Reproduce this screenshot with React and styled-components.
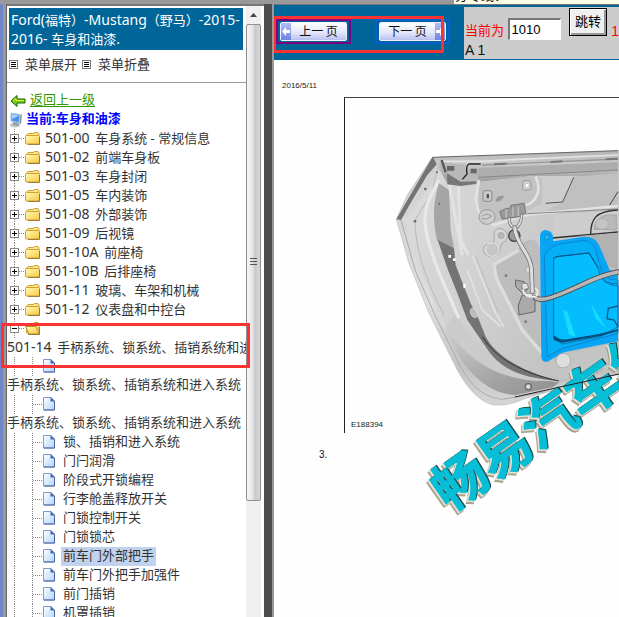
import React from 'react';
import styled, { createGlobalStyle } from 'styled-components';

const GlobalStyle = createGlobalStyle`
  * {
    box-sizing: border-box;
  }
  body {
    margin: 0;
    overflow: hidden;
    background: #999;
    font-family: "Noto Sans", "Noto Sans CJK SC", sans-serif;
    font-size: 13px;
    color: #333;
  }
`;

const Page = styled.div`
  display: flex;
  flex-direction: column;
  height: 100vh;
  overflow: hidden;
`;

const TopStrip = styled.div`
  display: flex;
  flex: none;
  justify-content: flex-end;
  align-items: flex-end;
  height: 4px;
  overflow: hidden;
  background: #999;
`;

const Hotline = styled.div`
  width: 165px;
  height: 16px;
  padding-left: 1px;
  background: #ffffe6;
  color: #111;
  line-height: 16px;
  white-space: nowrap;
  font-family: "Liberation Sans", "Noto Sans CJK SC", sans-serif;
`;

const Frames = styled.div`
  display: flex;
  flex: 1;
  min-height: 0;
`;

const Edge = styled.div`
  flex: none;
  width: 7px;
  border-left: 3px solid #6f86cc;
  border-right: 1px solid #666;
  background: #999;
`;

const Sidebar = styled.aside`
  position: relative;
  display: flex;
  flex: none;
  width: 257px;
  border-top: 2px solid #777;
  background: #fff;
`;

const SidebarBody = styled.div`
  flex: 1;
  min-width: 0;
  overflow: hidden;
  padding-top: 2px;
`;

const Title = styled.h1`
  margin: 0 3px 0 2px;
  padding: 2px;
  background: #069;
  color: #fff;
  font-size: 14px;
  font-weight: 400;
  white-space: nowrap;
`;

const Line = styled.span`
  display: block;
  height: 19px;
  line-height: 19px;
`;

const Cn = styled.span`
  font-size: 13px;
`;

const MenuRow = styled.div`
  display: flex;
  align-items: center;
  gap: 5px;
  height: 19px;
  margin: 5px 0 8px 2px;
`;

const MenuLink = styled.a`
  display: flex;
  align-items: center;
  gap: 7px;
  color: #333;
  line-height: 19px;
  text-decoration: none;
`;

const Rule = styled.hr`
  margin: 0 0 8px;
  border: 0;
  border-top: 1px solid #999;
`;

const CrumbRow = styled.div`
  display: flex;
  align-items: center;
  gap: ${(props) => props.$gap};
  height: 19px;
  padding-left: 3px;
`;

const BackLink = styled.a`
  height: 19px;
  color: #390;
  line-height: 17px;
  text-underline-offset: 2px;
`;

const Current = styled.strong`
  height: 19px;
  color: #00f;
  line-height: 17px;
`;

const Tree = styled.ul`
  margin: 0;
  padding: 0;
  list-style: none;
`;

const TreeItem = styled.li`
  white-space: nowrap;
`;

const TreeRow = styled.a`
  display: flex;
  height: 19px;
  color: #333;
  text-decoration: none;
`;

const TreeLabel = styled.span`
  height: 19px;
  padding: 0 2px;
  line-height: 17px;
  background: ${(props) => (props.$active ? '#c1d2ee' : 'transparent')};
`;

const WrappedLabel = styled.span`
  display: block;
  height: 19px;
  overflow: hidden;
  line-height: 17px;
`;

const Code = styled.span`
  margin-right: 2px;
  font-size: 14px;
`;

const ScrollTrack = styled.div`
  display: flex;
  flex: none;
  flex-direction: column;
  width: 18px;
  border-right: 3px solid #fff;
  background: #f0f0f0;
`;

const ScrollUp = styled.div`
  display: flex;
  flex: none;
  align-items: center;
  justify-content: center;
  height: 18px;
`;

const ScrollThumb = styled.div`
  display: flex;
  align-items: center;
  justify-content: center;
  height: 78%;
  border: 1px solid #8f8f8f;
  border-radius: 2px;
  background: linear-gradient(90deg, #f6f6f6, #e4e4e6 45%, #c8c8ce 60%, #d6d6da);
`;

const Divider = styled.div`
  flex: none;
  width: 10px;
  border-right: 2px solid #999;
  background: #4d4d4d;
`;

const Main = styled.main`
  display: flex;
  flex: 1;
  flex-direction: column;
  min-width: 0;
  overflow: hidden;
  border-top: 1px solid #777;
  background: #fff;
`;

const Toolbar = styled.div`
  position: relative;
  display: flex;
  flex: none;
  height: 55px;
  padding: 2px 0 1px;
  background: #069;
`;

const Pager = styled.div`
  display: flex;
  flex: none;
  gap: 24px;
  width: 190px;
  padding: 12px 0 0 2px;
`;

const PageButton = styled.button`
  display: flex;
  align-items: center;
  justify-content: center;
  width: 75px;
  height: 25px;
  padding: 0;
  border: 2px solid ${(props) => props.$outline};
  background: #069;
  color: #111;
  font: 12px "Noto Sans CJK SC", sans-serif;
`;

const ButtonFace = styled.span`
  display: flex;
  flex: 1;
  align-items: stretch;
  height: 19px;
  margin: 0 2px;
  border: 1px solid #f2f2ff;
  border-radius: 2px;
  background: linear-gradient(#fff, #e2e4fb 60%, #b9bff0);
`;

const ArrowCell = styled.span`
  display: flex;
  flex: none;
  align-items: center;
  justify-content: center;
  width: 10px;
  background: linear-gradient(#b3bdf3, #6f82e2);
`;

const ButtonText = styled.span`
  flex: 1;
  line-height: 16px;
  white-space: nowrap;
  text-align: center;
`;

const JumpPanel = styled.form`
  flex: 1;
  min-width: 0;
  overflow: hidden;
  padding: 1px 0 0 1px;
  background: #ccc;
`;

const JumpRow = styled.div`
  display: flex;
  align-items: flex-start;
  height: 33px;
  white-space: nowrap;
`;

const JumpLabel = styled.label`
  width: 43px;
  padding-top: 14px;
  color: #f00;
  line-height: 17px;
`;

const JumpInput = styled.input`
  width: 53px;
  height: 22px;
  margin-top: 10px;
  padding: 1px 2px;
  border: 1px solid #fff;
  border-top: 2px solid #777;
  border-left: 2px solid #777;
  background: #fff;
  font: 13px "Liberation Sans", sans-serif;
`;

const JumpButton = styled.button`
  width: 39px;
  height: 28px;
  margin-left: 8px;
  padding: 0 0 3px;
  border: 1px solid #000;
  background: #f0f0f0;
  box-shadow: inset 1px 1px #fff, inset -2px -2px #999;
  color: #000;
  font: 13px "Noto Sans CJK SC", sans-serif;
`;

const PageCount = styled.span`
  padding: 14px 0 0 4px;
  color: #f00;
  font: 14px/19px "Liberation Sans", sans-serif;
`;

const PageName = styled.div`
  color: #111;
  font: 14px/18px "Liberation Sans", sans-serif;
`;

const Document = styled.article`
  flex: 1;
  min-height: 0;
  padding-top: 21px;
  background: #fefefe;
  font-family: "Liberation Sans", sans-serif;
`;

const DocDate = styled.time`
  display: block;
  height: 16px;
  padding-left: 8px;
  color: #222;
  font-size: 8px;
  line-height: 10px;
`;

const Figure = styled.figure`
  display: flex;
  flex-direction: column;
  justify-content: space-between;
  height: 336px;
  margin: 0 0 0 70px;
  border-top: 1px solid #444;
  border-left: 1px solid #222;
`;

const Caption = styled.figcaption`
  padding: 0 0 3px 6px;
  color: #222;
  font-size: 8px;
  line-height: 10px;
`;

const Step = styled.p`
  margin: 16px 0 0 45px;
  color: #111;
  font-size: 10px;
  line-height: 12px;
`;

const Drawing = styled.svg`
  flex: none;
  display: block;
  overflow: visible;
`;

const Marker = styled.div`
  position: absolute;
  z-index: 2;
  pointer-events: none;
  border: 3px solid #fa3232;
  top: ${(props) => props.$top};
  left: ${(props) => props.$left};
  width: ${(props) => props.$width};
  height: ${(props) => props.$height};
`;

const folders = [
  ['501-00', '车身系统 - 常规信息'],
  ['501-02', '前端车身板'],
  ['501-03', '车身封闭'],
  ['501-05', '车内装饰'],
  ['501-08', '外部装饰'],
  ['501-09', '后视镜'],
  ['501-10A', '前座椅'],
  ['501-10B', '后排座椅'],
  ['501-11', '玻璃、车架和机械'],
  ['501-12', '仪表盘和中控台'],
];

const pages = [
  { name: '手柄系统、锁系统、插销系统和进入系统', wrapped: true },
  { name: '手柄系统、锁系统、插销系统和进入系统', wrapped: true },
  { name: '锁、插销和进入系统' },
  { name: '门闩润滑' },
  { name: '阶段式开锁编程' },
  { name: '行李舱盖释放开关' },
  { name: '门锁控制开关' },
  { name: '门锁锁芯' },
  { name: '前车门外部把手', active: true },
  { name: '前车门外把手加强件' },
  { name: '前门插销' },
  { name: '机罩插销' },
];

const MenuIcon = () => (
  <svg width="9" height="9" shapeRendering="crispEdges" aria-hidden="true">
    <rect x="0.5" y="0.5" width="8" height="8" fill="#fff" stroke="#777" />
    <path d="M2 2.5h5M2 4.5h5M2 6.5h5" stroke="#000" />
  </svg>
);

const BackIcon = () => (
  <svg width="16" height="14" viewBox="0 0 16 14" aria-hidden="true">
    <path d="M1 7L7 1.5V5H15V9H7V12.5Z" fill="#7c1" stroke="#161" />
    <path d="M3 7L6 4.5V6.5H14" fill="none" stroke="#ee3" />
  </svg>
);

const ComputerIcon = () => (
  <svg width="13" height="16" viewBox="0 0 13 16" aria-hidden="true">
    <ellipse cx="5" cy="13" rx="5" ry="2.5" fill="#c3c5c9" />
    <path d="M3 9L9 11L8 14L3 13Z" fill="#92a0b2" />
    <path d="M1 1L10 2.5L9 11L1 9Z" fill="#4d94e8" stroke="#b5c6de" />
    <path d="M2 2L9 3.5L2 7Z" fill="#a6d3fb" />
    <path d="M10.5 2L12 3L11 12L9.5 11.5Z" fill="#8996a8" />
  </svg>
);

const Branch = ({ toggle, stub }) => (
  <svg width="18" height="19" shapeRendering="crispEdges" aria-hidden="true">
    <path d="M7.5 0V19" stroke="#888" strokeDasharray="1 1" />
    {stub && <path d="M8 9.5H18" stroke="#888" strokeDasharray="1 1" />}
    {toggle && (
      <>
        <rect x="3.5" y="5.5" width="8" height="8" fill="#fff" stroke="#888" />
        <path d={toggle === 'open' ? 'M5 9.5h5' : 'M5 9.5h5M7.5 7v5'} stroke="#000" />
      </>
    )}
  </svg>
);

const FolderIcon = ({ open }) => (
  <svg width="18" height="19" viewBox="0 0 18 19" aria-hidden="true">
    <defs>
      <linearGradient id="folder" x2="1" y2="1">
        <stop stopColor="#fffbb8" />
        <stop offset="1" stopColor="#f8c840" />
      </linearGradient>
    </defs>
    <path d="M1.5 14V6L3 4.5H8L9.5 3.5H13L14 5V14Z" fill="#fbe58b" stroke="#cfa136" />
    {open ? (
      <path d="M0.5 7.5H11L14.5 15H4Z" fill="url(#folder)" stroke="#b98b25" />
    ) : (
      <rect x="0.5" y="6.5" width="14" height="8.5" rx="1" fill="url(#folder)" stroke="#cfa136" />
    )}
    <path d="M3 15.5H14.5V8" fill="none" stroke="#8e6a1d" strokeWidth="0.8" />
  </svg>
);

const PageIcon = () => (
  <svg width="18" height="19" viewBox="0 0 18 19" aria-hidden="true">
    <defs>
      <linearGradient id="page" x2="1" y2="1">
        <stop stopColor="#fff" />
        <stop offset="1" stopColor="#b0d5fc" />
      </linearGradient>
    </defs>
    <path d="M0.5 2.5H8L11.5 6V15H0.5Z" fill="url(#page)" stroke="#8299cc" />
    <path d="M7.5 2V6.5H12Z" fill="#4766ad" />
    <path d="M1 15H11.5V6" fill="none" stroke="#4a629e" />
  </svg>
);

const ArrowIcon = ({ right }) => (
  <svg width="8" height="9" viewBox="0 0 8 9" aria-hidden="true">
    <path d={right ? 'M8 4.5L4 0V3H0V6H4V9Z' : 'M0 4.5L4 0V3H8V6H4V9Z'} fill="#fff" />
  </svg>
);

const watermark = '畅易汽车维';

const DoorDrawing = () => (
  <Drawing width="274" height="318" viewBox="0 0 274 318" role="img" aria-label="车门">
    <defs>
      <linearGradient id="metal" x2="1" y2="0.4">
        <stop stopColor="#dcdcdc" />
        <stop offset="0.5" stopColor="#d0d0d0" />
        <stop offset="1" stopColor="#bfbfbf" />
      </linearGradient>
      <linearGradient id="rim" x2="0" y2="1">
        <stop stopColor="#cfcfcf" />
        <stop offset="0.6" stopColor="#dedede" />
        <stop offset="0.85" stopColor="#c4c4c4" />
        <stop offset="1" stopColor="#d6d6d6" />
      </linearGradient>
      <linearGradient id="lower" x2="1" y2="1">
        <stop stopColor="#d0d0d0" />
        <stop offset="0.6" stopColor="#a4a4a4" />
        <stop offset="1" stopColor="#8f8f8f" />
      </linearGradient>
      <linearGradient id="rail" x2="0" y2="1">
        <stop stopColor="#b2b2b2" />
        <stop offset="0.4" stopColor="#cacaca" />
        <stop offset="1" stopColor="#999" />
      </linearGradient>
      <clipPath id="sheet">
        <rect width="274" height="440" />
      </clipPath>
    </defs>
    <g clipPath="url(#sheet)">
      <g transform="translate(34 42) scale(0.3333)">
        {/* outer shell */}
        <path d="M160 52L190 54L720 32V702L520 752L440 775C400 792 375 797 345 795C300 785 265 745 235 690L150 520L90 370L52 238L85 165Z" fill="url(#rim)" stroke="#bbb" strokeWidth="2" />
        <path d="M160 52L52 238L66 240L100 180L145 105L188 56Z" fill="#747474" />
        <path d="M66 240L110 395L170 530L245 680C280 745 320 773 370 778L500 755" fill="none" stroke="#aaa" strokeWidth="3" />
        <path d="M188 60L160 130L78 240L120 385L180 520L255 640C310 705 380 735 465 745L717 690V60Z" fill="url(#metal)" />
        <path d="M195 570C225 620 235 645 265 685C310 735 350 762 410 765L520 742L540 728L400 700L290 640L220 560Z" fill="url(#lower)" />
        <path d="M200 560C250 640 330 710 465 722L540 724L400 690L280 600L230 520Z" fill="#cbcbcb" />
        <path d="M185 60C170 100 165 140 155 165L108 240C108 330 145 430 195 525" fill="none" stroke="#b8b8b8" strokeWidth="3" />
        <path d="M180 120C150 175 135 200 138 250C145 330 200 445 240 535" fill="none" stroke="#e8e8e8" strokeWidth="10" />
        {/* hinge side recess */}
        <path d="M180 130C160 190 162 245 174 300L190 320L225 325L215 270L210 150Z" fill="#a5a5a5" />
        <path d="M176 300L225 325L230 375L245 415L275 490L298 535L320 590C350 645 420 692 540 723C425 712 365 690 320 620L265 540L235 460L205 385Z" fill="#747474" />
        <path d="M310 590C350 655 430 700 540 723" fill="none" stroke="#333" strokeWidth="3" />
        <ellipse cx="284" cy="519" rx="9" ry="15" fill="#bbb" stroke="#ddd" strokeWidth="2" transform="rotate(-25 284 519)" />
        <path d="M208 345h8v8h-8zM222 355h8v8h-8zM210 340l5-4M252 434l7-4 2 12-7 3z" fill="#fff" />
        <path d="M280 345L350 520L375 560M265 390L310 510L365 560" fill="none" stroke="#e2e2e2" strokeWidth="5" />
        <path d="M290 350L357 515" fill="none" stroke="#bbb" strokeWidth="3" />
        <path d="M210 130L250 345M238 140L245 300L268 345" fill="none" stroke="#e2e2e2" strokeWidth="9" />
        {/* top rail */}
        <path d="M162 52L717 32V108L460 108L300 126L205 130L185 95Z" fill="url(#rail)" />
        <path d="M160 52L717 32" stroke="#666" strokeWidth="3" />
        <path d="M190 64L310 64L420 58L717 45" fill="none" stroke="#e4e4e4" strokeWidth="5" />
        <path d="M310 75L717 57" stroke="#999" strokeWidth="4" />
        <path d="M345 73L382 71M515 66L550 64M680 58L717 56" stroke="#777" strokeWidth="6" />
        <path d="M298 84L717 66V90L298 112Z" fill="#adadad" />
        <path d="M298 112L717 90" stroke="#888" strokeWidth="3" />
        <path d="M182 66L265 75L258 98L298 104V126L245 137L205 133V103L182 92Z" fill="#b8b8b8" />
        <path d="M204 100L245 125L292 124L292 132L245 138L205 133Z" fill="#777" />
        <path d="M204 78h22v14h-22zM275 86h18v14h-18z" fill="#666" />
        <path d="M305 72H270Q260 76 264 102L250 118" fill="none" stroke="#222" strokeWidth="4" />
        <path d="M188 60L200 97" stroke="#555" strokeWidth="7" />
        {/* inner panel */}
        <path d="M298 126L460 108L490 115L490 190L440 216L340 250L300 235Z" fill="#c2c2c2" />
        <path d="M490 112L584 108L555 185L500 190Z" fill="#cdcdcd" />
        <path d="M584 110L717 100V195L500 215L551 186Z" fill="#c0c0c0" />
        <path d="M584 112L551 186L500 190" fill="none" stroke="#555" strokeWidth="3" />
        <path d="M717 155L692 195" stroke="#444" strokeWidth="3" />
        <path d="M470 110C490 150 470 190 440 195M300 120L290 180L305 238L345 255L440 225L717 198" fill="none" stroke="#e2e2e2" strokeWidth="8" />
        <path d="M430 222L717 207" stroke="#888" strokeWidth="3" />
        <path d="M525 224L717 209V275L525 292Z" fill="#cdcdcd" />
        <path d="M635 285C635 235 650 214 717 210" fill="none" stroke="#333" strokeWidth="4" />
        <path d="M645 268Q650 226 690 225L712 225V270Z" fill="#b9b9b9" stroke="#999" strokeWidth="2" />
        <ellipse cx="669" cy="252" rx="19" ry="16" fill="#c4c4c4" stroke="#aaa" strokeWidth="2" />
        <path d="M520 294L717 276" stroke="#333" strokeWidth="4" />
        <path d="M600 288L717 278V390L670 370Z" fill="#b2b2b2" />
        <rect x="312" y="152" width="27" height="32" rx="7" fill="#c9c9c9" stroke="#888" strokeWidth="3" />
        <rect x="323" y="162" width="7" height="13" fill="#555" />
        <rect x="431" y="122" width="25" height="28" rx="5" fill="#ccc" stroke="#999" strokeWidth="3" />
        <rect x="440" y="132" width="8" height="9" fill="#fff" />
        <path d="M350 186Q350 163 375 168Q370 184 350 186Z" fill="#999" />
        <ellipse cx="324" cy="231" rx="24" ry="22" fill="#cdcdcd" stroke="#999" strokeWidth="3" />
        <path d="M308 229q17-13 30 0q-15 12-30 7" fill="none" stroke="#999" strokeWidth="3" />
        <path d="M362 215L380 206L395 204L395 196L435 190L440 218L420 230L370 238Z" fill="#999" stroke="#777" strokeWidth="3" />
        <path d="M382 208v25M402 202v27M418 200v27" stroke="#bbb" strokeWidth="5" />
        <path d="M345 310L345 275Q360 255 382 275Q392 300 368 310L360 340Q345 355 325 348Q305 335 318 316Z" fill="#d2d2d2" stroke="#aaa" strokeWidth="3" />
        <circle cx="366" cy="287" r="13" fill="#b4b4b4" stroke="#e3e3e3" strokeWidth="3" />
        <circle cx="340" cy="329" r="20" fill="#c6c6c6" stroke="#e3e3e3" strokeWidth="3" />
        <circle cx="406" cy="287" r="17" fill="#999" stroke="#444" strokeWidth="4" />
        <path d="M430 310Q470 280 485 330V625L445 580L380 480L345 390V370L390 355Z" fill="#bdbdbd" />
        <path d="M420 330L345 374L352 415L430 570L490 640" fill="none" stroke="#dcdcdc" strokeWidth="10" />
        <path d="M418 495L430 465L468 470V515L420 525Z" fill="#aaa" stroke="#666" strokeWidth="3" />
        <path d="M410 420L435 425L445 450L430 460L410 440Z" fill="#aaa" stroke="#666" strokeWidth="3" />
        <path d="M428 430l16 0 5 15-18 5zM436 460h25v10h-22z" fill="#e3e3e3" stroke="#666" strokeWidth="2" />
        <circle cx="381" cy="407" r="4" fill="#777" />
        <circle cx="440" cy="545" r="4" fill="#777" />
        <circle cx="448" cy="389" r="9" fill="#d8d8d8" stroke="#999" strokeWidth="2" />
        <g fill="#666">
          <circle cx="139" cy="147" r="4" />
          <circle cx="174" cy="97" r="3" />
          <circle cx="181" cy="191" r="3" />
          <circle cx="108" cy="244" r="4" />
        </g>
        {/* vapour barrier */}
        <path d="M483 288Q485 271 500 270Q518 272 522 288V304L615 290Q650 290 660 315L692 390L717 395V604L555 637L505 665Q488 668 487 650Z" fill="#0aa4f5" />
        <circle cx="504" cy="291" r="7" fill="#2cb8fb" stroke="#087db8" strokeWidth="2" />
        <path d="M505 650L496 350Q510 315 550 311L610 302Q640 302 650 330L670 400Q685 420 717 420V580L550 625Z" fill="#04aff8" stroke="#0886cc" strokeWidth="3" />
        <path d="M524 355Q528 350 540 349L630 339L658 385Q662 435 717 438V560L665 590L550 612L524 595Z" fill="#04bdff" stroke="#0873b0" strokeWidth="3" />
        <path d="M524 356Q528 350 540 349L630 339L658 385" fill="none" stroke="#064f7a" strokeWidth="3" />
        <path d="M526 586Q540 602 565 598L660 582L717 568V573L665 588L550 608L524 600Z" fill="#074d7c" />
        <path d="M552 510L565 515L590 590L570 584ZM635 488L683 568L650 535Z" fill="#16dcff" />
        <path d="M717 498L688 505L684 536L705 540L717 560" fill="none" stroke="#075988" strokeWidth="4" />
        <path d="M668 405Q675 435 717 430" fill="none" stroke="#0876b8" strokeWidth="3" />
        {/* wiring loom */}
        <g fill="none" strokeLinecap="round">
          <path d="M390 235Q390 260 410 265Q428 250 428 225" stroke="#666" strokeWidth="9" />
          <path d="M390 235Q390 260 410 265Q428 250 428 225" stroke="#e2e2e2" strokeWidth="5" />
          <path d="M407 263C412 320 460 340 458 400L460 455" stroke="#777" strokeWidth="14" />
          <path d="M407 263C412 320 460 340 458 400L460 455" stroke="#dedede" strokeWidth="9" />
          <path d="M470 474C490 486 530 470 600 438C650 414 690 400 717 396" stroke="#555" strokeWidth="16" />
          <path d="M470 474C490 486 530 470 600 438C650 414 690 400 717 396" stroke="#b9b9b9" strokeWidth="10" />
          <path d="M432 450q5 25 38 20q12-15 0-25" stroke="#eee" strokeWidth="5" />
        </g>
        <path d="M545 645L717 608V685L540 720L505 680Z" fill="#c4c4c4" />
        <circle cx="553" cy="662" r="22" fill="#dedede" stroke="#aaa" strokeWidth="3" />
        <circle cx="448" cy="740" r="9" fill="#ddd" stroke="#666" strokeWidth="4" />
      </g>
      <g fontFamily="Noto Sans CJK SC, sans-serif" fontSize="54" fontWeight="700">
        <g transform="translate(113 386) rotate(-35)">
          <text x="-27" y="20" fill="#aaa395" stroke="#aaa395" strokeWidth="2">{watermark}</text>
        </g>
        <g transform="translate(114 384) rotate(-35)">
          <text x="-27" y="20" fill="#e8e2d2" stroke="#e8e2d2" strokeWidth="2">{watermark}</text>
        </g>
        <g transform="translate(116 382) rotate(-35)">
          <text x="-27" y="20" fill="#17474b" stroke="#17474b" strokeWidth="1">{watermark}</text>
        </g>
        <g transform="translate(115 383) rotate(-35)">
          <text x="-27" y="20" fill="#07bed6" stroke="#07bed6" strokeWidth="1">{watermark}</text>
        </g>
      </g>
      <path d="M170 299L274 276" stroke="#222" strokeWidth="1" />
    </g>
  </Drawing>
);

const Folder = ({ code, name }) => (
  <TreeItem>
    <TreeRow href="#">
      <Branch toggle="closed" stub />
      <FolderIcon />
      <TreeLabel>
        <Code>{code} </Code>
        {name}
      </TreeLabel>
    </TreeRow>
  </TreeItem>
);

const Leaf = ({ name, wrapped, active }) => (
  <TreeItem>
    <TreeRow href="#">
      <Branch />
      <Branch stub />
      <PageIcon />
      {!wrapped && <TreeLabel $active={active}>{name}</TreeLabel>}
    </TreeRow>
    {wrapped && <WrappedLabel>{name}</WrappedLabel>}
  </TreeItem>
);

const App = () => {
  return (
    <Page>
      <GlobalStyle />
      <TopStrip>
        <Hotline>分专线：020-87096205</Hotline>
      </TopStrip>
      <Frames>
        <Edge />
        <Sidebar>
          <SidebarBody>
            <Title>
              <Line>Ford(<Cn>福特）</Cn>-Mustang<Cn>（野马）</Cn>-2015-</Line>
              <Line>2016- <Cn>车身和油漆</Cn>.</Line>
            </Title>
            <MenuRow>
              <MenuLink href="#"><MenuIcon />菜单展开</MenuLink>
              <MenuLink href="#"><MenuIcon />菜单折叠</MenuLink>
            </MenuRow>
            <Rule />
            <CrumbRow $gap="4px">
              <BackIcon />
              <BackLink href="#">返回上一级</BackLink>
            </CrumbRow>
            <CrumbRow $gap="3px">
              <ComputerIcon />
              <Current>当前:车身和油漆</Current>
            </CrumbRow>
            <Tree>
              {folders.map(([code, name]) => (
                <Folder key={code} code={code} name={name} />
              ))}
              <TreeItem>
                <TreeRow href="#">
                  <Branch toggle="open" stub />
                  <FolderIcon open />
                </TreeRow>
                <WrappedLabel><Code>501-14 </Code>手柄系统、锁系统、插销系统和进入系统</WrappedLabel>
                <Tree>
                  {pages.map((page, i) => (
                    <Leaf key={i} {...page} />
                  ))}
                </Tree>
              </TreeItem>
            </Tree>
          </SidebarBody>
          <ScrollTrack>
            <ScrollUp>
              <svg width="7" height="4" aria-hidden="true">
                <path d="M0 4L3.5 0L7 4Z" fill="#444" />
              </svg>
            </ScrollUp>
            <ScrollThumb>
              <svg width="7" height="8" shapeRendering="crispEdges" aria-hidden="true">
                <path d="M0 0.5h7M0 3.5h7M0 6.5h7" stroke="#555" />
              </svg>
            </ScrollThumb>
          </ScrollTrack>
          <Marker $top="317px" $left="-6px" $width="249px" $height="45px" />
        </Sidebar>
        <Divider />
        <Main>
          <Toolbar>
            <Pager>
              <PageButton type="button" $outline="#800080">
                <ButtonFace>
                  <ArrowCell><ArrowIcon /></ArrowCell>
                  <ButtonText>上一 页</ButtonText>
                </ButtonFace>
              </PageButton>
              <PageButton type="button" $outline="#0a5fd0">
                <ButtonFace>
                  <ButtonText>下一 页</ButtonText>
                  <ArrowCell><ArrowIcon right /></ArrowCell>
                </ButtonFace>
              </PageButton>
            </Pager>
            <JumpPanel onSubmit={(e) => e.preventDefault()}>
              <JumpRow>
                <JumpLabel htmlFor="page-number">当前为</JumpLabel>
                <JumpInput id="page-number" type="text" defaultValue="1010" />
                <JumpButton type="submit">跳转</JumpButton>
                <PageCount>1</PageCount>
              </JumpRow>
              <PageName>A 1</PageName>
            </JumpPanel>
            <Marker $top="11px" $left="-1px" $width="171px" $height="37px" />
          </Toolbar>
          <Document>
            <DocDate>2016/5/11</DocDate>
            <Figure>
              <DoorDrawing />
              <Caption>E188394</Caption>
            </Figure>
            <Step>3.</Step>
          </Document>
        </Main>
      </Frames>
    </Page>
  );
};

export default App;
